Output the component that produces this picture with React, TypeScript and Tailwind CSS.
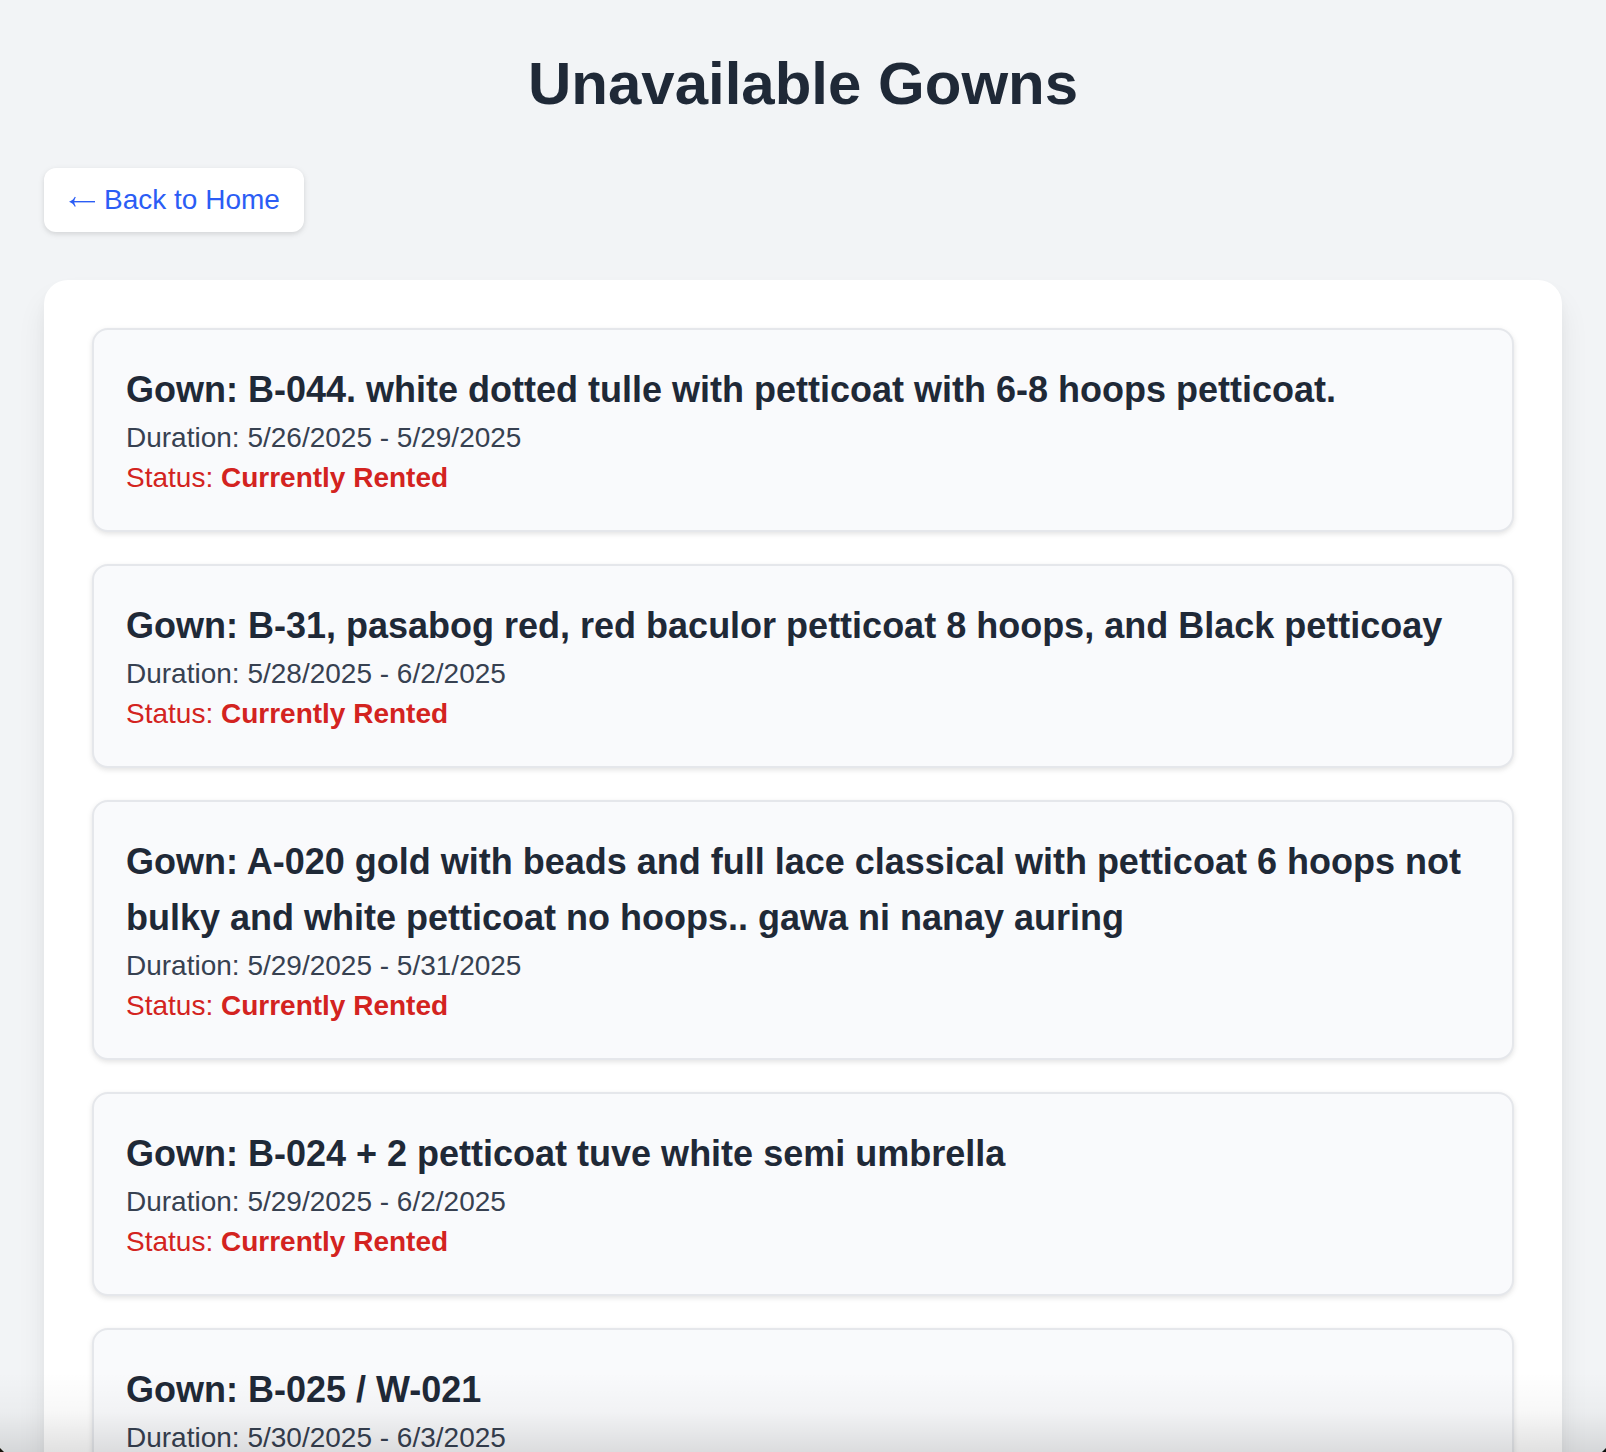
const gowns = [
  { name: "B-044. white dotted tulle with petticoat with 6-8 hoops petticoat.", duration: "5/26/2025 - 5/29/2025" },
  { name: "B-31, pasabog red, red baculor petticoat 8 hoops, and Black petticoay", duration: "5/28/2025 - 6/2/2025" },
  { name: "A-020 gold with beads and full lace classical with petticoat 6 hoops not bulky and white petticoat no hoops.. gawa ni nanay auring", duration: "5/29/2025 - 5/31/2025" },
  { name: "B-024 + 2 petticoat tuve white semi umbrella", duration: "5/29/2025 - 6/2/2025" },
  { name: "B-025 / W-021", duration: "5/30/2025 - 6/3/2025" },
];

export default function App() {
  return (
    <div className="relative h-screen overflow-hidden bg-[#f2f4f6] px-11 pt-12 font-['Liberation_Sans',Arial,sans-serif] text-[#1f2937]">
      <h1 className="text-center text-[60px] leading-[72px] font-bold">Unavailable Gowns</h1>
      <a href="#home" className="mt-12 inline-flex h-16 items-center gap-2 rounded-xl bg-white px-6 text-[28px] leading-10 text-[#2b5df5] shadow-[0_2px_6px_rgba(0,0,0,0.1),0_2px_4px_rgba(0,0,0,0.04)]">
        <svg width="28" height="28" viewBox="0 0 28 28" fill="none" stroke="currentColor" strokeWidth="1.4" aria-hidden="true">
          <path d="M27 15.700H3" />
          <path d="M1 15.700C4 14.500 5.800 13 6.800 10.700L7.800 11.200C6.800 13 6.200 14.700 6.200 15.700C6.200 16.700 6.800 18.400 7.800 20.200L6.800 20.700C5.800 18.400 4 16.900 1 15.700Z" fill="currentColor" stroke="none" />
        </svg>
        Back to Home
      </a>
      <main className="mt-12 rounded-3xl bg-white p-12 shadow-[0_20px_30px_rgba(0,0,0,0.07),0_8px_12px_rgba(0,0,0,0.03)]">
        <ul className="flex flex-col gap-8">
          {gowns.map((gown) => (
            <li key={gown.name} className="rounded-2xl border-2 border-[#e5e7eb] bg-[#f9fafc] p-8 shadow-[0_2px_6px_rgba(0,0,0,0.08),0_2px_4px_rgba(0,0,0,0.04)]">
              <h2 className="text-[36px] leading-14 font-bold">Gown: {gown.name}</h2>
              <p className="text-[28px] leading-10 text-[#374151]">Duration: {gown.duration}</p>
              <p className="text-[28px] leading-10 text-[#d32320]">
                Status: <strong>Currently Rented</strong>
              </p>
            </li>
          ))}
        </ul>
      </main>
      <div className="pointer-events-none absolute inset-x-0 bottom-0 flex h-20 items-end justify-between bg-linear-to-t from-black/12 via-black/3 to-transparent">
        <svg width="4" height="4" viewBox="0 0 4 4" fill="#17120a" aria-hidden="true">
          <path d="M0 0L4 4H0Z" />
        </svg>
        <svg width="4" height="4" viewBox="0 0 4 4" fill="#0d0f0c" aria-hidden="true">
          <path d="M4 0V4H0Z" />
        </svg>
      </div>
    </div>
  );
}
